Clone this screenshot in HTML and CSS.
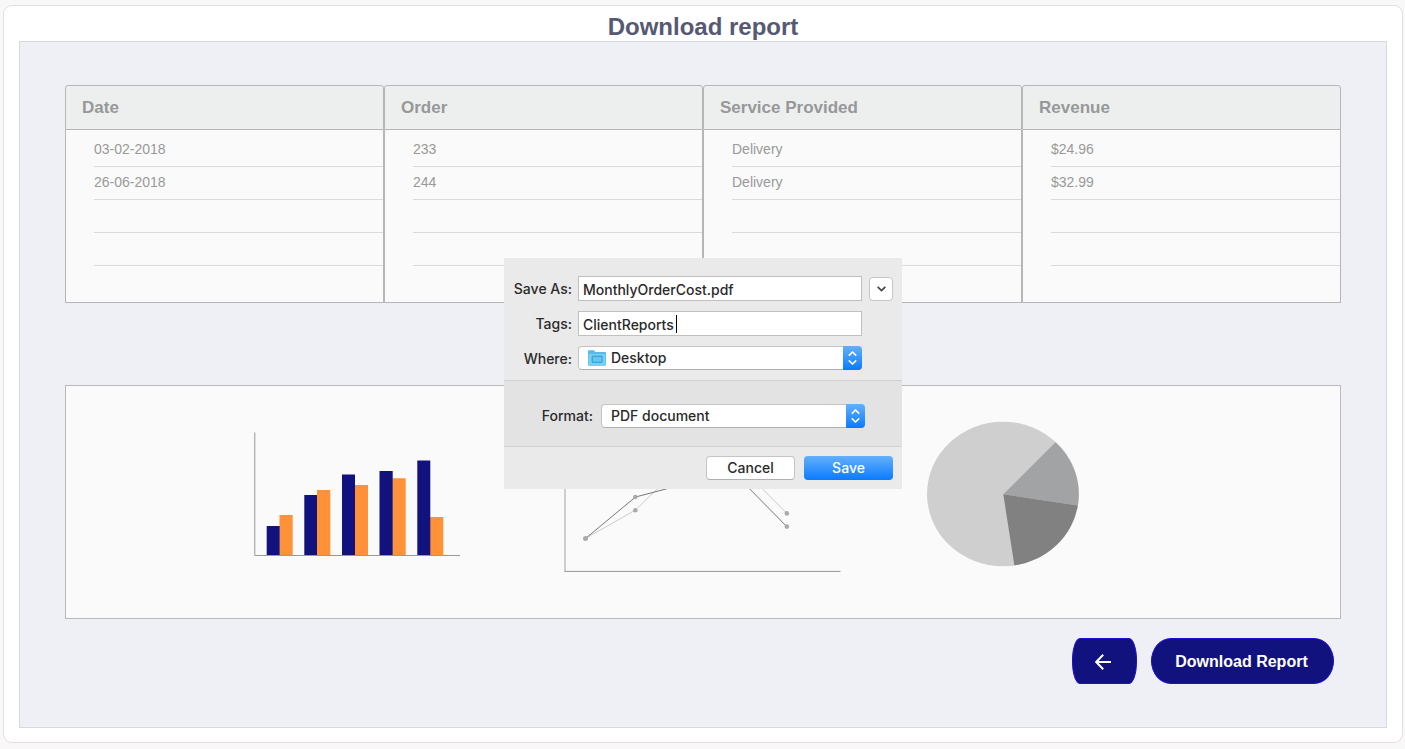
FILE: index.html
```html
<!DOCTYPE html>
<html lang="en">
<head>
<meta charset="utf-8">
<title>Download report</title>
<link rel="stylesheet" href="styles.css">
</head>
<body>
<main class="card">
  <h1 class="title">Download report</h1>
  <div class="panel">
    <table class="orders">
      <thead>
        <tr><th scope="col">Date</th><th scope="col">Order</th><th scope="col">Service Provided</th><th scope="col">Revenue</th></tr>
      </thead>
      <tbody>
        <tr><td><div>03-02-2018</div></td><td><div>233</div></td><td><div>Delivery</div></td><td><div>$24.96</div></td></tr>
        <tr><td><div>26-06-2018</div></td><td><div>244</div></td><td><div>Delivery</div></td><td><div>$32.99</div></td></tr>
        <tr><td><div></div></td><td><div></div></td><td><div></div></td><td><div></div></td></tr>
        <tr><td><div></div></td><td><div></div></td><td><div></div></td><td><div></div></td></tr>
        <tr><td><div></div></td><td><div></div></td><td><div></div></td><td><div></div></td></tr>
      </tbody>
    </table>

    <section class="charts" aria-label="Charts">
      <svg class="bars" width="206" height="151" viewBox="254 421 206 151" role="img" aria-label="Bar chart">
        <g fill="#ff9138">
          <path d="M279.5 515H292.7V555.5H279.5zM317 490H330.3V555.5H317zM355 485H368V555.5H355zM392.5 478.3H405.7V555.5H392.5zM430 517H443.3V555.5H430z"/>
        </g>
        <g fill="#11127e">
          <path d="M266.7 526H279.7V555.5H266.7zM304.3 495H317V555.5H304.3zM342 474.5H355V555.5H342zM379.5 471H392.7V555.5H379.5zM417.3 460.5H430.3V555.5H417.3z"/>
        </g>
        <path d="M254.8 432.5V555.5H460" fill="none" stroke="#999"/>
      </svg>
      <svg class="lines" width="277" height="151" viewBox="564 421 277 151" role="img" aria-label="Line chart">
        <path d="M565 432V571.5" stroke="#bfbfbf" stroke-width="1.5"/>
        <path d="M564.5 571.4H840.5" stroke="#949494"/>
        <path d="M585.5 538.5L635.5 510L685 462H736L786.7 513.3" fill="none" stroke="#ccc"/>
        <path d="M585.5 538.5L635.5 497L685 484L736 475L786.7 526.5" fill="none" stroke="#777"/>
        <g fill="#aaa"><circle cx="585.5" cy="538.4" r="2.5"/><circle cx="635.3" cy="497" r="2.3"/><circle cx="635.3" cy="510.3" r="2.3"/><circle cx="786.8" cy="513.4" r="2.3"/><circle cx="786.8" cy="526.6" r="2.3"/></g>
      </svg>
      <svg class="pie" width="152" height="151" viewBox="927 421 152 151" role="img" aria-label="Pie chart">
        <ellipse cx="1003" cy="494" rx="76" ry="72.3" fill="#cfcfcf"/>
        <path d="M1003.3 494.3L1055.5 442.3A76 72.3 0 0 1 1077.8 505.5z" fill="#a2a3a5"/>
        <path d="M1003.3 494.3L1077.8 505.5A76 72.3 0 0 1 1014.4 565.4z" fill="#818181"/>
      </svg>
    </section>

    <div class="actions">
      <button class="btn btn-back" type="button" aria-label="Back">
        <svg width="17" height="16" viewBox="0 0 17 16" fill="none" stroke="#fff" stroke-width="2"><path d="M16 8H1.5M8.2 .8L1.2 8l7 7.2"/></svg>
      </button>
      <button class="btn btn-download" type="button">Download Report</button>
    </div>

    <form class="dialog" role="dialog" aria-label="Save report">
      <div class="fields">
        <label for="name">Save As:</label>
        <input class="text" id="name" type="text" value="MonthlyOrderCost.pdf">
        <button class="expand" type="button" aria-label="Expand"><svg width="9" height="6" viewBox="0 0 9 6" fill="none" stroke="#444" stroke-width="1.7"><path d="M.7 .8L4.5 4.6L8.3 .8"/></svg></button>
        <label for="tags">Tags:</label>
        <span class="tagbox"><input class="text" id="tags" type="text" value="ClientReports"><i class="caret"></i></span>
        <label for="where">Where:</label>
        <span class="picker">
          <svg class="folder" width="18" height="16" viewBox="0 0 18 16"><path d="M0 1.2Q0 .3 .9 .3H6L7.4 2H17Q18 2 18 3V15Q18 15.8 17 15.8H1Q0 15.8 0 15z" fill="#5bb9e6"/><path d="M.5 4H17.5V15H.5z" fill="#76d0f5"/><path d="M4.2 6.2H14V12.3H4.2z" fill="#67c6f0" stroke="#2b9bcf"/></svg>
          <select class="with-icon" id="where"><option>Desktop</option></select>
          <span class="stepper"><svg width="9" height="14" viewBox="0 0 9 14" fill="none" stroke="#fff" stroke-width="1.5"><path d="M.8 4.6L4.5 1L8.2 4.6M.8 9.4L4.5 13L8.2 9.4"/></svg></span>
        </span>
      </div>
      <div class="format">
        <label for="format">Format:</label>
        <span class="picker">
          <select id="format"><option>PDF document</option></select>
          <span class="stepper"><svg width="9" height="14" viewBox="0 0 9 14" fill="none" stroke="#fff" stroke-width="1.5"><path d="M.8 4.6L4.5 1L8.2 4.6M.8 9.4L4.5 13L8.2 9.4"/></svg></span>
        </span>
      </div>
      <div class="choices">
        <button class="choice" type="button">Cancel</button>
        <button class="choice primary" type="button">Save</button>
      </div>
    </form>
  </div>
</main>
</body>
</html>
```
FILE: styles.css
```css
* { box-sizing: border-box; }
body {
  margin: 0;
  padding: 5px 2px 6px 3px;
  background: #f8f8f8;
  font-family: "Liberation Sans", Arial, sans-serif;
}
.card {
  padding: 7px 15px 14px;
  background: #fff;
  border: 1px solid #e8dcdf;
  border-radius: 9px;
}
.title {
  margin: 0;
  font-size: 24px;
  line-height: 28px;
  text-align: center;
  color: #565972;
}
.panel {
  position: relative;
  padding: 43px 45px;
  background: #eff0f6;
  border: 1px solid #d8d8e2;
}
.orders {
  width: 100%;
  table-layout: fixed;
  border-collapse: separate;
  border-spacing: 0;
  color: #999;
}
.orders th {
  height: 45px;
  padding: 1px 16px 0;
  font-size: 17px;
  text-align: left;
  color: #97989a;
  background: #edefee;
  border: 1px solid #b5b6b9;
  border-radius: 3px 3px 0 0;
}
.orders td {
  padding: 0 0 0 28px;
  background: #fafafa;
  border: solid #b5b6b9;
  border-width: 0 1px;
  font-size: 14px;
}
.orders td div {
  height: 33px;
  line-height: 30px;
  border-bottom: 1px solid #dadada;
}
.orders tbody tr:first-child td { padding-top: 4px; }
.orders tbody tr:last-child td { border-bottom-width: 1px; }
.orders tbody tr:last-child div { height: 36px; border: 0; }

.charts {
  display: flex;
  margin-top: 82px;
  padding: 35px 188px 46px;
  background: #fafafa;
  border: 1px solid #b9babd;
}
.charts svg { flex: none; }
.lines { margin-left: 104px; }
.pie { margin-left: 86px; }

.actions {
  display: flex;
  justify-content: flex-end;
  gap: 14px;
  margin-top: 19px;
  padding-right: 7px;
}
.btn {
  display: flex;
  align-items: center;
  justify-content: center;
  height: 46px;
  padding: 1px 2px 0 0;
  font: bold 16px "Liberation Sans", Arial, sans-serif;
  color: #fff;
  background: #11127e;
  border: 1px solid #1c10d2;
}
.btn-back { width: 65px; border-radius: 8px / 22px; }
.btn-download { width: 183px; border-radius: 20px / 23px; }

.dialog {
  position: absolute;
  top: 216px;
  left: 50%;
  width: 398px;
  transform: translateX(-50%);
  background: #eaeaea;
  font: 500 14px Inter, "Open Sans", sans-serif;
  color: #2a2a2a;
}
.dialog input, .dialog select, .dialog button { font: inherit; color: inherit; }
.dialog label { text-align: right; }
.fields {
  display: grid;
  grid-template-columns: 74px 284px 31px;
  grid-auto-rows: 25px;
  align-items: center;
  row-gap: 10px;
  padding: 18px 0 9px;
}
.fields > label { grid-column: 1; padding-right: 6px; }
.fields .picker { align-self: start; }
.text {
  display: block;
  width: 100%;
  height: 25px;
  padding: 1px 4px 0;
  background: #fff;
  border: 1px solid #c0c0c0;
  border-radius: 0;
  outline: 0;
}
.tagbox { position: relative; }
.caret {
  position: absolute;
  top: 4px;
  left: 98px;
  width: 1px;
  height: 18px;
  background: #000;
}
.expand {
  display: flex;
  align-items: center;
  justify-content: center;
  justify-self: end;
  width: 24px;
  height: 24px;
  padding: 0;
  background: #fff;
  border: 1px solid #c6c6c6;
  border-radius: 4px;
}
.picker {
  position: relative;
  display: block;
  height: 24px;
}
.picker select {
  appearance: none;
  display: block;
  width: 100%;
  height: 24px;
  padding: 0 24px 2px 9px;
  background: #fff;
  border: 1px solid #c4c4c4;
  border-bottom-color: #b0b0b0;
  border-radius: 4px;
}
.picker .with-icon { padding-left: 32px; }
.folder {
  position: absolute;
  top: 4px;
  left: 10px;
}
.stepper {
  position: absolute;
  top: 0;
  right: 0;
  display: flex;
  align-items: center;
  justify-content: center;
  width: 19px;
  height: 24px;
  background: linear-gradient(#64b0fb, #0a7bff);
  border-radius: 0 4px 4px 0;
  pointer-events: none;
}
.format {
  display: flex;
  align-items: center;
  justify-content: flex-end;
  gap: 8px;
  padding: 23px 37px 18px 0;
  background: #e3e3e3;
  border: solid #d2d2d2;
  border-width: 1px 0;
}
.format label { padding-bottom: 2px; }
.format .picker { width: 264px; }
.choices {
  display: flex;
  justify-content: flex-end;
  gap: 9px;
  padding: 9px;
}
.choice {
  width: 89px;
  height: 24px;
  padding: 0 0 1px;
  background: #fff;
  border: 1px solid #c4c4c4;
  border-bottom-color: #b0b0b0;
  border-radius: 4px;
}
.dialog .primary {
  color: #fff;
  background: linear-gradient(#64b0fb, #0a7bff);
  border: 0;
}
```
